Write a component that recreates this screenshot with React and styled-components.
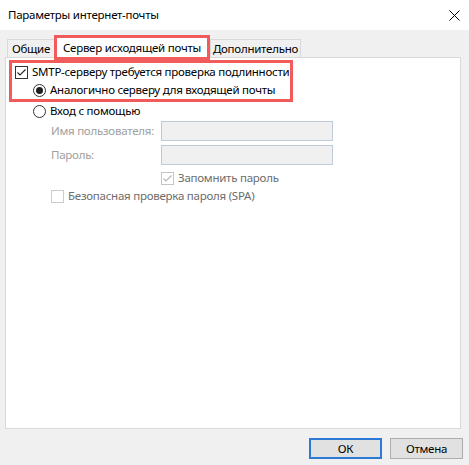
import React from "react";
import styled, { createGlobalStyle, css } from "styled-components";

const Global = createGlobalStyle`
  html, body { margin: 0; padding: 0; background: #f0f0f0; }
  body {
    font-family: "Noto Sans", "Open Sans", sans-serif;
    font-size: 11.5px;
    letter-spacing: -0.25px;
    color: #000;
  }
  * { box-sizing: border-box; }
`;

const RED = "#f25b5b";

const Window = styled.div`
  width: 469px;
  height: 465px;
  background: #f0f0f0;
  display: flex;
  flex-direction: column;
`;

const TitleBar = styled.div`
  height: 30px;
  background: #fff;
  display: flex;
  align-items: center;
  justify-content: space-between;
  padding: 0 9px 0 8px;
`;

const Title = styled.span`
  line-height: 16px;
`;

const Content = styled.div`
  padding: 0 8px 0 5px;
  display: flex;
  flex-direction: column;
`;

const TabStrip = styled.div`
  height: 27px;
  display: flex;
  align-items: flex-end;
  padding-left: 2px;
  position: relative;
  z-index: 2;
`;

const Tab = styled.div`
  height: 18px;
  width: ${(p) => p.$w}px;
  border: 1px solid #d9d9d9;
  border-bottom: none;
  background: #f0f0f0;
  display: flex;
  align-items: center;
  justify-content: center;
  line-height: 16px;
  white-space: nowrap;
  ${(p) =>
    p.$active &&
    css`
      height: 25px;
      margin-bottom: -3px;
      margin-left: -1px;
      border: 3px solid ${RED};
      background: #fff;
      align-items: flex-start;
      padding-top: 2px;
    `}
`;

const Panel = styled.div`
  height: 372px;
  background: #fff;
  border: 1px solid #d9d9d9;
  display: flex;
  flex-direction: column;
  padding: 2px 0 0 0;
`;

const Highlight = styled.div`
  width: 284px;
  height: 42px;
  margin-left: 3px;
  border: 3px solid ${RED};
  padding: 0 3px;
  display: flex;
  flex-direction: column;
`;

const Row = styled.label`
  height: 18px;
  display: flex;
  align-items: center;
  gap: ${(p) => p.$gap ?? 4}px;
  margin-left: ${(p) => p.$indent ?? 0}px;
  margin-top: ${(p) => p.$top ?? 0}px;
  color: ${(p) => p.$color ?? "#000"};
  white-space: nowrap;
  line-height: 16px;
`;

const Box = styled.span`
  width: 13px;
  height: 13px;
  flex: none;
  border: 1px solid ${(p) => p.$border};
  background: #fff;
  display: flex;
  align-items: center;
  justify-content: center;
`;

const Radio = styled.span`
  width: 13px;
  height: 13px;
  flex: none;
  border: 1px solid #333;
  border-radius: 50%;
  background: #fff;
  display: flex;
  align-items: center;
  justify-content: center;
  &::after {
    content: "";
    display: ${(p) => (p.$checked ? "block" : "none")};
    width: 7px;
    height: 7px;
    border-radius: 50%;
    background: #1f1f1f;
  }
`;

const Form = styled.div`
  margin: 1px 0 0 45px;
  display: grid;
  grid-template-columns: 110px 172px;
  row-gap: 4px;
  align-items: center;
`;

const FieldLabel = styled.span`
  color: #a0a0a0;
  line-height: 16px;
  white-space: nowrap;
`;

const Input = styled.div`
  height: 20px;
  background: #f0f0f0;
  border: 1px solid #bfcad9;
`;

const Footer = styled.div`
  display: flex;
  justify-content: flex-end;
  gap: 8px;
  padding-top: 9px;
  margin-right: -2px;
`;

const Button = styled.button`
  width: 73px;
  height: 21px;
  font-family: inherit;
  font-size: inherit;
  letter-spacing: inherit;
  color: #000;
  background: #e1e1e1;
  border: ${(p) => (p.$default ? "2px solid #2c7ad6" : "1px solid #adadad")};
  padding: 0;
  line-height: 16px;
`;

const Check = ({ color }) => (
  <svg width="11" height="11" viewBox="0 0 11 11">
    <path d="M1.5 5.5 L4 8 L9.5 2.5" fill="none" stroke={color} strokeWidth="1.1" />
  </svg>
);

const CloseIcon = () => (
  <svg width="11" height="11" viewBox="0 0 11 11">
    <path d="M0.5 0.5 L10.5 10.5 M10.5 0.5 L0.5 10.5" stroke="#000" strokeWidth="1" />
  </svg>
);

export default function App() {
  return (
    <>
      <Global />
      <Window>
        <TitleBar>
          <Title>Параметры интернет-почты</Title>
          <CloseIcon />
        </TitleBar>
        <Content>
          <TabStrip>
            <Tab $w={48}>Общие</Tab>
            <Tab $w={156} $active>Сервер исходящей почты</Tab>
            <Tab $w={91}>Дополнительно</Tab>
          </TabStrip>
          <Panel>
            <Highlight>
              <Row $gap={4}>
                <Box $border="#333">
                  <Check color="#222" />
                </Box>
                SMTP-серверу требуется проверка подлинности
              </Row>
              <Row $indent={18}>
                <Radio $checked />
                Аналогично серверу для входящей почты
              </Row>
            </Highlight>
            <Row $indent={27}>
              <Radio />
              Вход с помощью
            </Row>
            <Form>
              <FieldLabel>Имя пользователя:</FieldLabel>
              <Input />
              <FieldLabel>Пароль:</FieldLabel>
              <Input />
            </Form>
            <Row $indent={155} $top={4} $color="#6d6d6d">
              <Box $border="#c4c4c4">
                <Check color="#b5b5b5" />
              </Box>
              Запомнить пароль
            </Row>
            <Row $indent={45} $color="#6d6d6d">
              <Box $border="#cccccc" />
              Безопасная проверка пароля (SPA)
            </Row>
          </Panel>
          <Footer>
            <Button $default>ОК</Button>
            <Button>Отмена</Button>
          </Footer>
        </Content>
      </Window>
    </>
  );
}
